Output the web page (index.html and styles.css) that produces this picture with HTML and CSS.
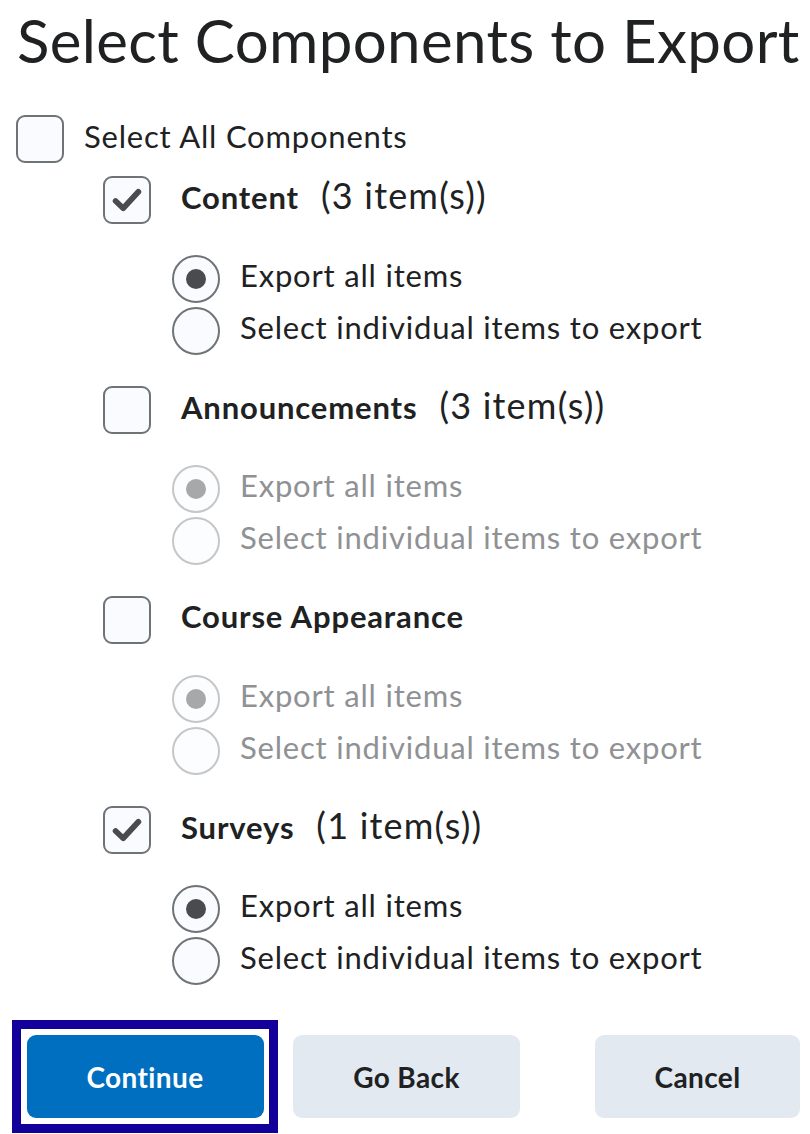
FILE: index.html
```html
<!DOCTYPE html>
<html>
<head>
<meta charset="utf-8">
<link rel="stylesheet" href="styles.css">
</head>
<body>
<h1 class="title">Select Components to Export</h1>

<div class="select-all">
  <span class="checkbox"></span>
  <span class="select-all-label">Select All Components</span>
</div>

<div class="component">
  <div class="comp-head">
    <span class="checkbox checked"><svg viewBox="0 0 24 24"><path d="M4.8 12.6 L9.6 17.2 L19.2 6.8" fill="none" stroke="#494c4e" stroke-width="3.6" stroke-linecap="round" stroke-linejoin="round"/></svg></span>
    <span class="comp-text"><span class="comp-name">Content</span><span class="comp-count">(3 item(s))</span></span>
  </div>
  <div class="radios">
    <div class="radio-row"><span class="radio on"></span><span class="radio-label">Export all items</span></div>
    <div class="radio-row"><span class="radio"></span><span class="radio-label">Select individual items to export</span></div>
  </div>
</div>

<div class="component">
  <div class="comp-head">
    <span class="checkbox"></span>
    <span class="comp-text"><span class="comp-name">Announcements</span><span class="comp-count">(3 item(s))</span></span>
  </div>
  <div class="radios disabled">
    <div class="radio-row"><span class="radio on"></span><span class="radio-label">Export all items</span></div>
    <div class="radio-row"><span class="radio"></span><span class="radio-label">Select individual items to export</span></div>
  </div>
</div>

<div class="component">
  <div class="comp-head">
    <span class="checkbox"></span>
    <span class="comp-text"><span class="comp-name">Course Appearance</span></span>
  </div>
  <div class="radios disabled">
    <div class="radio-row"><span class="radio on"></span><span class="radio-label">Export all items</span></div>
    <div class="radio-row"><span class="radio"></span><span class="radio-label">Select individual items to export</span></div>
  </div>
</div>

<div class="component">
  <div class="comp-head">
    <span class="checkbox checked"><svg viewBox="0 0 24 24"><path d="M4.8 12.6 L9.6 17.2 L19.2 6.8" fill="none" stroke="#494c4e" stroke-width="3.6" stroke-linecap="round" stroke-linejoin="round"/></svg></span>
    <span class="comp-text"><span class="comp-name">Surveys</span><span class="comp-count">(1 item(s))</span></span>
  </div>
  <div class="radios">
    <div class="radio-row"><span class="radio on"></span><span class="radio-label">Export all items</span></div>
    <div class="radio-row"><span class="radio"></span><span class="radio-label">Select individual items to export</span></div>
  </div>
</div>

<div class="buttons">
  <div class="focus-ring"><button class="btn primary">Continue</button></div>
  <button class="btn secondary goback">Go Back</button>
  <button class="btn secondary cancel">Cancel</button>
</div>
</body>
</html>
```

FILE: styles.css
```css
html, body {
  margin: 0;
  padding: 0;
  background: #ffffff;
}
body {
  font-family: Lato, "Noto Sans", sans-serif;
  color: #202122;
  width: 810px;
  height: 1134px;
  overflow: hidden;
}
.title {
  margin: 0;
  padding: 4px 0 0 17px;
  font-size: 60px;
  font-weight: 400;
  line-height: 72px;
  letter-spacing: 0.35px;
  white-space: nowrap;
}
.checkbox {
  box-sizing: border-box;
  width: 48px;
  height: 48px;
  flex: 0 0 48px;
  border: 2px solid #6e7376;
  border-radius: 9px;
  background: #f9fbff;
  display: flex;
  align-items: center;
  justify-content: center;
}
.checkbox svg {
  width: 38px;
  height: 38px;
}
.select-all {
  display: flex;
  align-items: center;
  margin-top: 39px;
  padding-left: 16px;
  height: 48px;
}
.select-all-label {
  margin-left: 20px;
  font-size: 31px;
  letter-spacing: 0.8px;
  position: relative;
  top: -3px;
}
.component {
  padding-left: 103px;
  margin-top: 13px;
  height: 197px;
}
.comp-head {
  display: flex;
  align-items: center;
  height: 48px;
}
.comp-text {
  display: flex;
  align-items: baseline;
  margin-left: 30px;
  position: relative;
  top: -4px;
}
.comp-name {
  font-size: 31px;
  line-height: 34px;
  font-weight: 700;
  letter-spacing: 0.85px;
}
.comp-count {
  margin-left: 22px;
  font-size: 36px;
  line-height: 34px;
  letter-spacing: 1.2px;
}
.radios {
  margin-top: 31px;
  padding-left: 69px;
  display: flex;
  flex-direction: column;
  gap: 4px;
}
.radio-row {
  display: flex;
  align-items: center;
  height: 48px;
}
.radio {
  box-sizing: border-box;
  width: 48px;
  height: 48px;
  flex: 0 0 48px;
  border: 2px solid #6e7376;
  border-radius: 50%;
  background: #f9fbff;
  display: flex;
  align-items: center;
  justify-content: center;
}
.radio.on::after {
  content: "";
  width: 20px;
  height: 20px;
  border-radius: 50%;
  background: #494c4e;
}
.radio-label {
  margin-left: 20px;
  font-size: 31px;
  letter-spacing: 0.8px;
  position: relative;
  top: -4px;
}
.radios.disabled .radio {
  border-color: #c4c6c8;
  background: #fcfdff;
}
.radios.disabled .radio.on::after {
  background: #a6a8aa;
}
.radios.disabled .radio-label {
  color: #8f9194;
}
.buttons {
  display: flex;
  align-items: center;
  margin-top: 17px;
  padding-left: 12px;
}
.focus-ring {
  box-sizing: border-box;
  width: 266px;
  height: 113px;
  border: 9px solid #13009b;
  background: #ffffff;
  display: flex;
  align-items: center;
  justify-content: center;
}
.btn {
  font-family: Lato, "Noto Sans", sans-serif;
  font-size: 28px;
  font-weight: 700;
  letter-spacing: 0.4px;
  border: none;
  border-radius: 9px;
  height: 83px;
  padding: 0;
  cursor: pointer;
}
.primary {
  background: #006fbf;
  color: #ffffff;
  width: 237px;
}
.secondary {
  background: #e3e9f1;
  color: #202122;
}
.goback {
  width: 227px;
  margin-left: 15px;
}
.cancel {
  width: 205px;
  margin-left: 75px;
}
```
